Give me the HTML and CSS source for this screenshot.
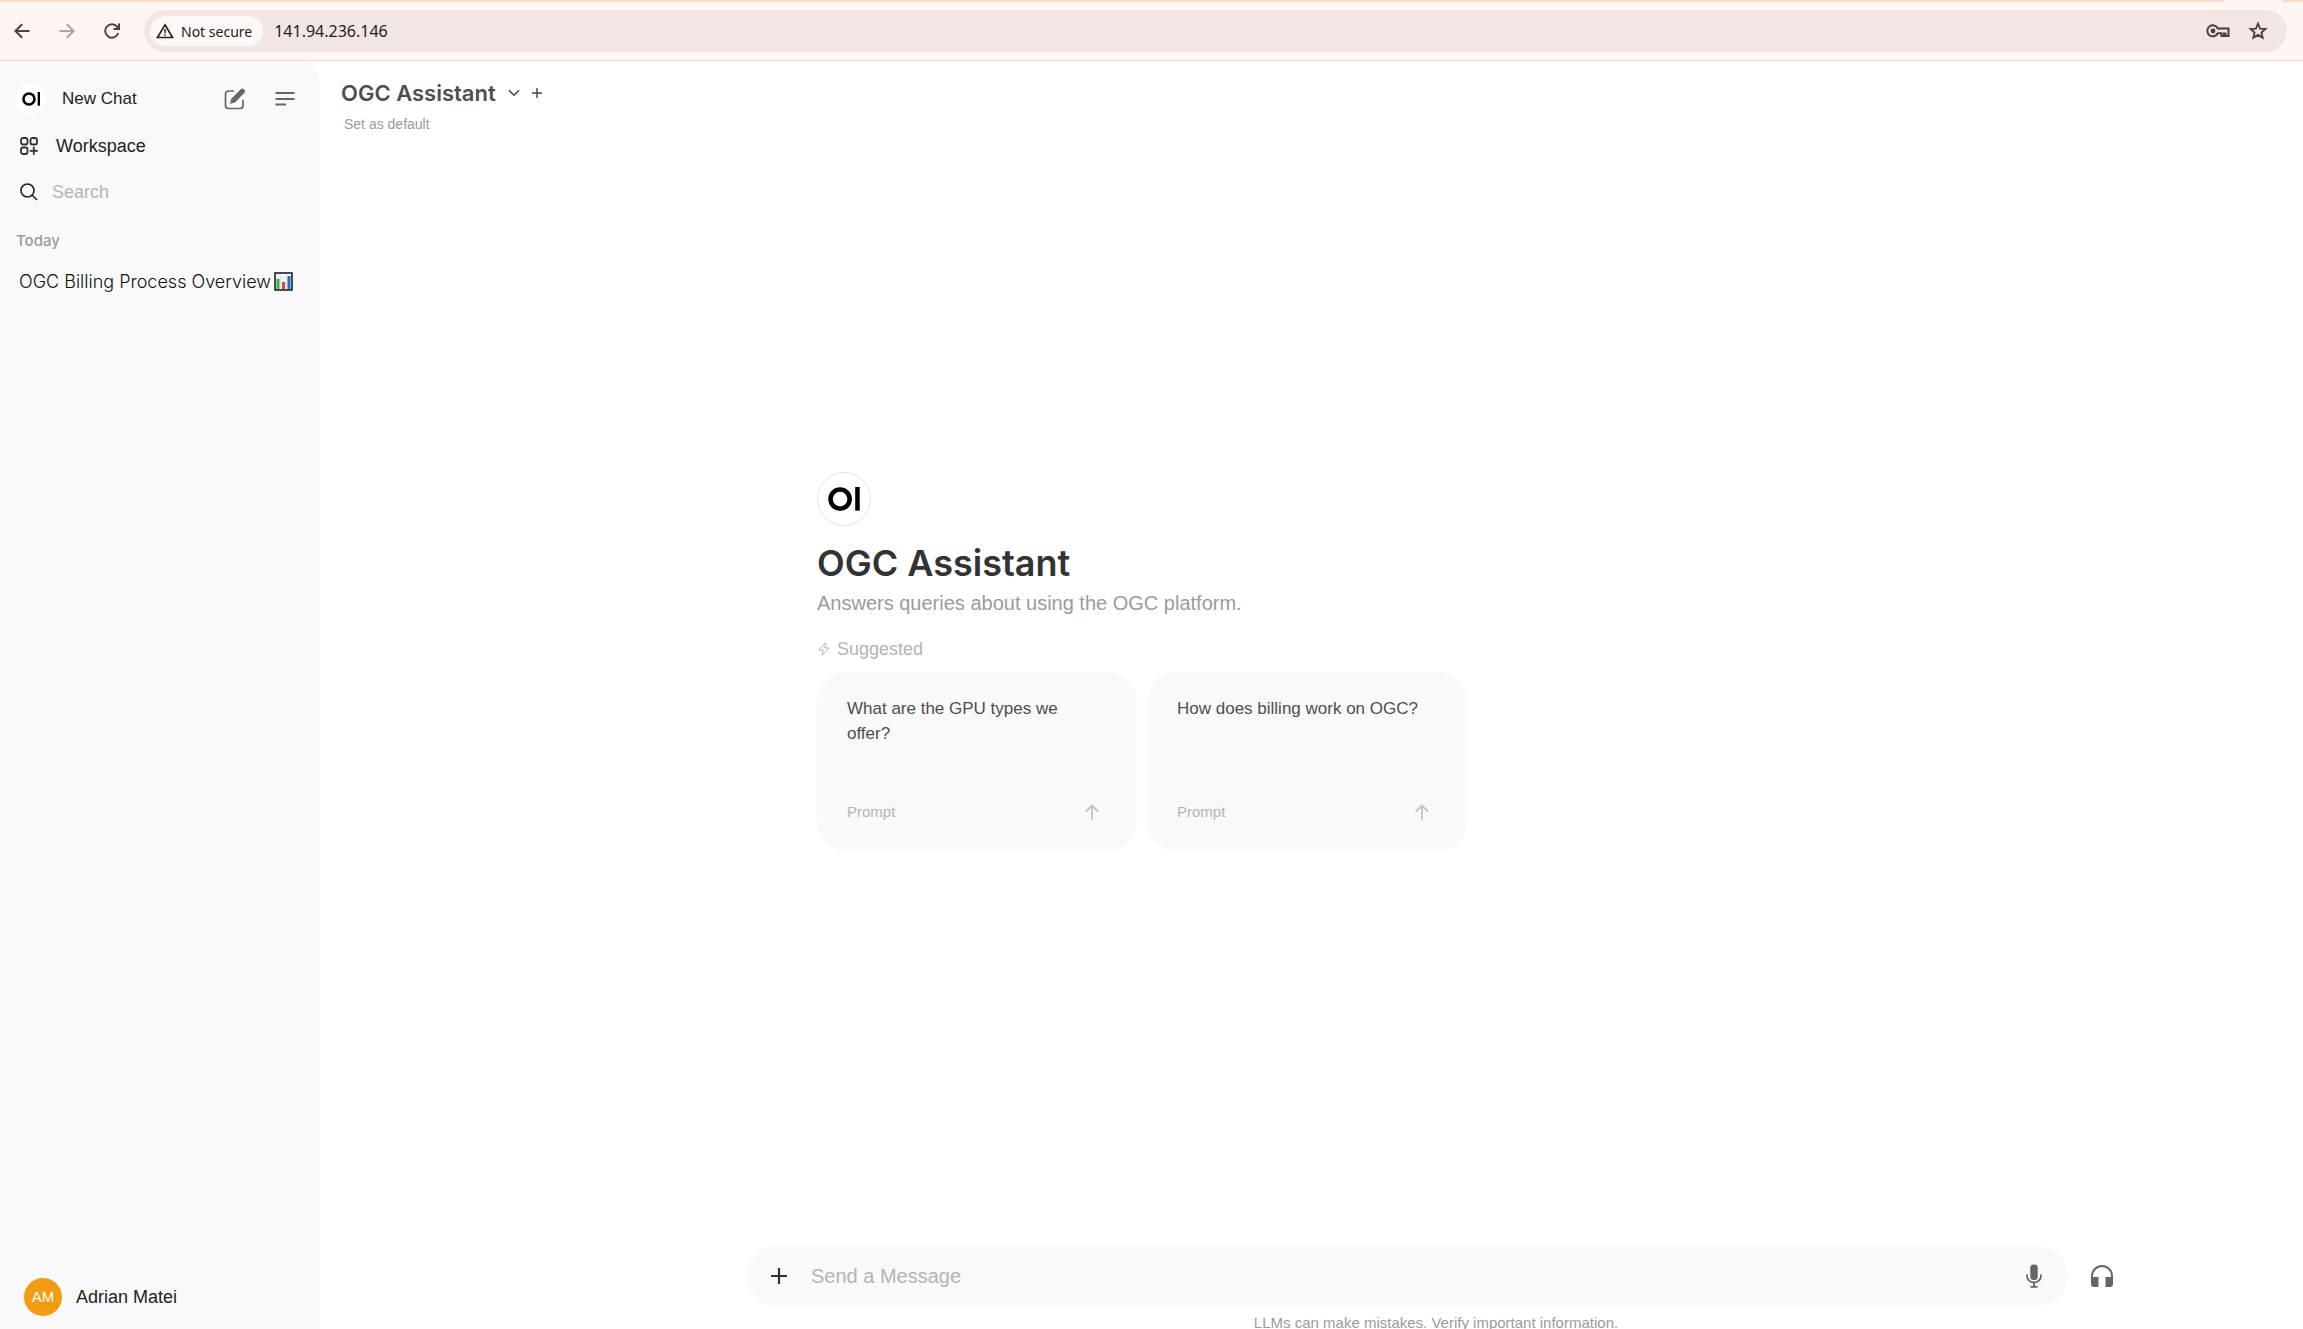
FILE: index.html
```html
<!DOCTYPE html>
<html lang="en">
<head>
  <meta charset="UTF-8" />
  <meta name="viewport" content="width=device-width, initial-scale=1" />
  <title>OGC Assistant</title>
  <link rel="stylesheet" href="styles.css">
</head>
<body>
  <!-- Browser toolbar -->
  <header class="browser">
    <div class="tab-strip"><span class="active-tab"></span></div>
    <div class="toolbar">
      <div class="nav-buttons">
        <button type="button" aria-label="Back">
          <svg width="16" height="16" viewBox="0 0 16 16" fill="none" stroke="#544039" stroke-width="2"><path d="M15.5 8H1.8M8.2 1.2L1.4 8l6.8 6.8" /></svg>
        </button>
        <button type="button" aria-label="Forward">
          <svg width="16" height="16" viewBox="0 0 16 16" fill="none" stroke="#aaa3a1" stroke-width="2"><path d="M.5 8h13.7M7.8 1.2L14.6 8l-6.8 6.8" /></svg>
        </button>
        <button type="button" aria-label="Reload">
          <svg width="16" height="16" viewBox="0 0 16 16" fill="none" stroke="#544039" stroke-width="2"><path d="M14.3 10A6.7 6.7 0 1 1 13.2 3.8L14.4 5.3" /><path d="M15 .5V6H9.5" /></svg>
        </button>
      </div>
      <div class="address-bar">
        <button type="button" class="security-chip">
          <svg width="18" height="16" viewBox="0 0 18 16" fill="none" stroke="#2b2422" stroke-width="1.700"><path d="M9 1.800L16.500 14.500H1.500z" /><path d="M9 6v4.200M9 11.200v1.600" stroke-width="1.500" /></svg>
          Not secure
        </button>
        <input type="text" class="address" aria-label="Address" value="141.94.236.146" />
        <button type="button" aria-label="Passwords">
          <svg width="24" height="14" viewBox="0 0 24 14" fill="none" stroke="#4b3d39" stroke-width="2"><path d="M11.8 4.5A5.5 5.5 0 1 0 11.8 9.2H15.500V12h2.500V9.500h1.500V12H22.500V4.500z" /><circle cx="7" cy="7" r="2.400" fill="#4b3d39" stroke="none" /></svg>
        </button>
        <button type="button" aria-label="Bookmark this page">
          <svg width="20" height="20" viewBox="0 0 20 20" fill="none" stroke="#4b3d39" stroke-width="1.800"><path d="M10 2.600l2.100 5 5.400.4-4.100 3.500 1.300 5.300-4.700-2.900-4.700 2.900 1.300-5.300L2.500 8l5.400-.4z" /></svg>
        </button>
      </div>
    </div>
  </header>

  <div class="app">
    <!-- Sidebar -->
    <nav class="sidebar">
      <div class="sidebar-top">
        <a href="#" class="new-chat">
          <span class="logo"><svg viewBox="0 0 32 24"><circle cx="12" cy="12" r="9.500" fill="none" stroke="#000" stroke-width="4.500" /><rect x="27" y="0" width="4.500" height="23.500" /></svg></span>
          <span class="new-chat-label">New Chat</span>
          <svg width="22" height="22" viewBox="0 0 22 22" fill="none" stroke="#666" stroke-width="1.700"><path d="M10 3H4.500A3 3 0 0 0 1.500 6v11.500a3 3 0 0 0 3 3H16a3 3 0 0 0 3-3V12" /><path d="M6 15.800l1.300-5L16.500 1.500a2.400 2.400 0 0 1 3.700 3.600L11 14.500z" fill="#666" stroke="none" /></svg>
        </a>
        <button type="button" aria-label="Toggle sidebar">
          <svg width="20" height="14" viewBox="0 0 20 14" stroke="#666" stroke-width="1.800"><path d="M.5 1h19M.5 7h19M.5 12.500H11" /></svg>
        </button>
      </div>
      <a href="#" class="workspace">
        <svg width="18" height="18" viewBox="0 0 18 18" fill="none" stroke="#333" stroke-width="1.800"><rect x="1" y="1" width="6.500" height="6.500" rx="2" /><rect x="10.500" y="1" width="6.500" height="6.500" rx="2" /><rect x="1" y="10.500" width="6.500" height="6.500" rx="2" /><path d="M13.800 9.800v8M9.800 13.800h8" /></svg>
        Workspace
      </a>
      <label class="search">
        <svg width="18" height="18" viewBox="0 0 18 18" fill="none" stroke="#222" stroke-width="1.600"><circle cx="7.500" cy="7.500" r="6.500" /><path d="M12.200 12.200L17 17" /></svg>
        <input type="text" placeholder="Search" aria-label="Search" />
      </label>
      <h2 class="group-title">Today</h2>
      <a href="#" class="chat-item">
        OGC Billing Process Overview
        <svg width="19" height="19" viewBox="0 0 19 19"><rect x="1" y="1" width="17" height="17" fill="#f6f8fa" stroke="#111" stroke-width="1.500" /><path d="M6.500 2v15M12.500 2v15M2 6h15M2 11h15" stroke="#ccd8df" stroke-width=".6" /><rect x="2.500" y="7" width="3" height="10" fill="#31b43c" /><rect x="8" y="10" width="3" height="7" fill="#e5413b" /><rect x="13.500" y="4" width="3" height="13" fill="#1677bd" /></svg>
      </a>
      <button type="button" class="user">
        <span class="avatar">AM</span>
        Adrian Matei
      </button>
    </nav>

    <!-- Chat -->
    <main class="chat">
      <div class="chat-header">
        <div class="model-row">
          <button type="button" class="model">
            OGC Assistant
            <svg width="12" height="8" viewBox="0 0 12 8" fill="none" stroke="#444" stroke-width="1.600"><path d="M1 1.200l5 5 5-5" /></svg>
          </button>
          <button type="button" aria-label="Add model">
            <svg width="10" height="10" viewBox="0 0 10 10" stroke="#444" stroke-width="1.400"><path d="M5 0v10M0 5h10" /></svg>
          </button>
        </div>
        <button type="button" class="set-default">Set as default</button>
      </div>

      <section class="welcome">
        <span class="logo logo-large"><svg viewBox="0 0 32 24"><circle cx="12" cy="12" r="9.500" fill="none" stroke="#000" stroke-width="4.500" /><rect x="27" y="0" width="4.500" height="23.500" /></svg></span>
        <h1>OGC Assistant</h1>
        <p class="description">Answers queries about using the OGC platform.</p>
        <div class="suggested">
          <svg width="14" height="14" viewBox="0 0 14 14" fill="none" stroke="#b4b4b4" stroke-linejoin="round"><path d="M8.800.7L1.800 8h4.500l-1.200 5.300L12.200 6H7.700z" /></svg>
          Suggested
        </div>
        <div class="cards">
          <button type="button" class="card">
            <span class="card-title">What are the GPU types we offer?</span>
            <span class="card-foot">Prompt
              <svg width="14" height="16" viewBox="0 0 14 16" fill="none" stroke="#c4c4c4" stroke-width="1.800" stroke-linecap="round"><path d="M7 15V1.500M1.500 7L7 1.500 12.500 7" /></svg>
            </span>
          </button>
          <button type="button" class="card">
            <span class="card-title">How does billing work on OGC?</span>
            <span class="card-foot">Prompt
              <svg width="14" height="16" viewBox="0 0 14 16" fill="none" stroke="#c4c4c4" stroke-width="1.800" stroke-linecap="round"><path d="M7 15V1.500M1.500 7L7 1.500 12.500 7" /></svg>
            </span>
          </button>
        </div>
      </section>

      <footer class="composer">
        <form class="composer-row">
          <div class="message-box">
            <button type="button" aria-label="Add files">
              <svg width="16" height="16" viewBox="0 0 16 16" stroke="#333" stroke-width="2.200"><path d="M8 0v16M0 8h16" /></svg>
            </button>
            <input type="text" placeholder="Send a Message" aria-label="Message" />
            <button type="button" aria-label="Record voice">
              <svg width="16" height="24" viewBox="0 0 16 24" fill="none" stroke="#666" stroke-width="1.800"><rect x="4.300" y=".5" width="7.400" height="15.500" rx="3.300" fill="#666" stroke="none" /><path d="M1 10.500v1.500a7 6.500 0 0 0 14 0v-1.500M8 18.500V22.500M4.500 22.800h7" /></svg>
            </button>
          </div>
          <button type="button" aria-label="Call">
            <svg width="24" height="24" viewBox="0 0 24 24" fill="#666"><path d="M1 20V12a11 11 0 0 1 22 0v8a3 3 0 0 1-3 3h-4.500V13H21v-1a9 9 0 0 0-18 0v1h5.500v10H4a3 3 0 0 1-3-3z" /></svg>
          </button>
        </form>
        <p class="disclaimer">LLMs can make mistakes. Verify important information.</p>
      </footer>
    </main>
  </div>
</body>
</html>
```
FILE: styles.css
```css
* {
  margin: 0;
  padding: 0;
  box-sizing: border-box;
}

body {
  height: 100vh;
  display: flex;
  flex-direction: column;
  overflow: hidden;
  background: #fff;
  color: #222;
  font-family: "Liberation Sans", Arial, sans-serif;
  font-size: 17px;
}

button,
input {
  border: none;
  background: none;
  outline: none;
  color: inherit;
  font: inherit;
}

button {
  display: flex;
  align-items: center;
  cursor: pointer;
}

a {
  color: inherit;
  text-decoration: none;
}

svg {
  display: block;
  flex-shrink: 0;
}

/* browser toolbar */
.browser {
  background: #fff6f3;
  border-bottom: 1px solid #ead9d4;
}

.tab-strip {
  height: 2px;
  padding-right: 20px;
  background: #fdd9c9;
}

.active-tab {
  display: block;
  width: 60px;
  height: 2px;
  margin-left: auto;
  background: #fff6f3;
}

.toolbar {
  display: flex;
  align-items: center;
  padding: 8px 16px 8px 14px;
}

.nav-buttons {
  display: flex;
  gap: 29px;
  margin-right: 24px;
}

.address-bar {
  flex: 1;
  display: flex;
  align-items: center;
  gap: 18px;
  height: 42px;
  padding: 0 19px 0 6px;
  border-radius: 21px;
  background: #f2e6e4;
}

.security-chip {
  gap: 7px;
  height: 30px;
  padding: 0 11px 0 6px;
  border-radius: 15px;
  background: #fff8f6;
  font-family: "Noto Sans", sans-serif;
  font-size: 14px;
}

.address {
  flex: 1;
  margin-left: -7px;
  font-family: "Noto Sans", sans-serif;
  font-size: 16px;
}

.app {
  flex: 1;
  display: flex;
  min-height: 0;
}

/* sidebar */
.sidebar {
  display: flex;
  flex-direction: column;
  width: 319px;
  padding: 16px 16px 13px;
  border-top-right-radius: 20px;
  background: #f9f9f9;
}

.sidebar-top {
  display: flex;
  align-items: center;
  gap: 29px;
  height: 44px;
  padding-right: 8px;
}

.new-chat {
  flex: 1;
  display: flex;
  align-items: center;
}

.new-chat-label {
  flex: 1;
  margin-left: 16px;
}

.logo {
  display: flex;
  align-items: center;
  justify-content: center;
  width: 30px;
  height: 30px;
  border-radius: 50%;
  background: #fff;
}

.logo svg {
  width: 62%;
}

.workspace,
.search {
  display: flex;
  align-items: center;
  padding-left: 4px;
  font-size: 18px;
}

.workspace {
  gap: 18px;
  height: 50px;
}

.search {
  gap: 14px;
  height: 42px;
}

.search input {
  width: 100%;
}

.search input::placeholder,
.message-box input::placeholder {
  color: #b4b4b4;
}

.group-title {
  margin-top: 16px;
  color: #9b9b9b;
  font-family: Inter, sans-serif;
  font-size: 15px;
  font-weight: 500;
  line-height: 24px;
}

.chat-item {
  display: flex;
  align-items: center;
  gap: 3px;
  height: 40px;
  margin-top: 8px;
  padding-left: 3px;
  color: #111;
  font-family: Inter, sans-serif;
  font-size: 18px;
  font-weight: 300;
  white-space: nowrap;
}

.user {
  gap: 14px;
  margin-top: auto;
  padding-left: 8px;
  font-size: 18px;
}

.avatar {
  width: 38px;
  border-radius: 50%;
  background: #f39c12;
  color: #fff;
  font-size: 15px;
  line-height: 38px;
  text-align: center;
}

/* chat */
.chat {
  flex: 1;
  display: flex;
  flex-direction: column;
  min-width: 0;
}

.chat-header {
  padding: 18px 22px 0;
}

.model-row {
  display: flex;
  gap: 12px;
}

.model {
  gap: 12px;
  color: #4e4e4e;
  font-family: Inter, sans-serif;
  font-size: 22px;
  font-weight: 600;
  line-height: 28px;
}

.set-default {
  margin-top: 8px;
  padding-left: 3px;
  color: #9b9b9b;
  font-size: 14px;
  line-height: 18px;
}

.welcome {
  flex: 1;
  display: flex;
  flex-direction: column;
  justify-content: center;
  width: 650px;
  margin-left: 498px;
  padding-bottom: 56px;
}

.logo-large {
  width: 54px;
  height: 54px;
  border: 1px solid #e3e3e3;
}

h1 {
  margin-top: 13px;
  color: #333;
  font-family: Inter, sans-serif;
  font-size: 36px;
  font-weight: 600;
  line-height: 48px;
}

.description {
  color: #9b9b9b;
  font-size: 20px;
  line-height: 32px;
}

.suggested {
  display: flex;
  align-items: center;
  gap: 6px;
  margin: 18px 0 11px;
  color: #b4b4b4;
  font-size: 18px;
  line-height: 24px;
}

.cards {
  display: flex;
  gap: 10px;
}

.card {
  flex: 1;
  flex-direction: column;
  align-items: stretch;
  justify-content: space-between;
  height: 179px;
  padding: 24px 38px 28px 30px;
  border-radius: 30px;
  background: #f9f9f9;
  text-align: left;
}

.card-title {
  color: #4e4e4e;
  line-height: 25px;
}

.card-foot {
  display: flex;
  align-items: center;
  justify-content: space-between;
  color: #b4b4b4;
  font-size: 15px;
  line-height: 22px;
}

.composer {
  height: 83px;
  margin: 0 178px 0 428px;
}

.composer-row {
  display: flex;
  align-items: center;
  gap: 22px;
  padding-right: 11px;
}

.message-box {
  flex: 1;
  display: flex;
  align-items: center;
  height: 60px;
  padding: 0 26px 0 24px;
  border-radius: 30px;
  background: #f9f9f9;
}

.message-box input {
  flex: 1;
  margin-left: 24px;
  font-size: 20px;
}

.disclaimer {
  margin-top: 6px;
  color: #9b9b9b;
  font-size: 15px;
  line-height: 22px;
  text-align: center;
}
```
